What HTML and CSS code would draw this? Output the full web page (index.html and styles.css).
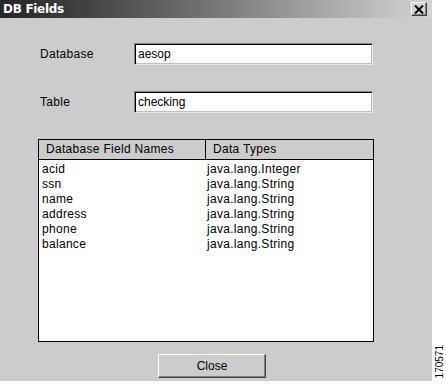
FILE: index.html
```html
<!DOCTYPE html>
<html>
<head>
<meta charset="utf-8">
<link rel="stylesheet" href="styles.css">
</head>
<body>
<div class="screen">
  <div class="dialog">
    <div class="titlebar">
      <span class="title">DB Fields</span>
      <span class="xbtn"><svg width="10" height="9" viewBox="0 0 10 9"><path d="M1 0.5 L9 8.5 M9 0.5 L1 8.5" stroke="#000" stroke-width="2"/></svg></span>
    </div>
    <div class="content">
      <div class="form">
        <label class="lbl">Database</label>
        <div class="field">aesop</div>
        <label class="lbl">Table</label>
        <div class="field">checking</div>
      </div>
      <div class="table">
        <div class="thead">
          <div class="th c1">Database Field Names</div>
          <div class="th c2">Data Types</div>
        </div>
        <div class="tbody">
          <div class="tr"><span class="c1">acid</span><span class="c2">java.lang.Integer</span></div>
          <div class="tr"><span class="c1">ssn</span><span class="c2">java.lang.String</span></div>
          <div class="tr"><span class="c1">name</span><span class="c2">java.lang.String</span></div>
          <div class="tr"><span class="c1">address</span><span class="c2">java.lang.String</span></div>
          <div class="tr"><span class="c1">phone</span><span class="c2">java.lang.String</span></div>
          <div class="tr"><span class="c1">balance</span><span class="c2">java.lang.String</span></div>
        </div>
      </div>
      <div class="actions">
        <button class="btn">Close</button>
      </div>
    </div>
  </div>
  <div class="side"><span class="code">170571</span></div>
</div>
</body>
</html>
```

FILE: styles.css
```css
* { box-sizing: border-box; }
html, body { margin: 0; padding: 0; background: #fff; }
body { font-family: "Liberation Sans", Arial, sans-serif; font-size: 12px; letter-spacing: 0.3px; color: #000; }

.screen { display: flex; width: 446px; height: 384px; }
.dialog { flex: none; width: 432px; height: 381px; background: #cccccc; display: flex; flex-direction: column; }

.titlebar {
  height: 18px;
  display: flex; align-items: center; justify-content: space-between;
  padding: 0 5px 0 3px;
  background: linear-gradient(to right, #262626 0%, #3a3a3a 15%, #6e6e6e 45%, #a8a8a8 75%, #d4d4d4 100%);
}
.title { color: #fff; font-weight: bold; font-size: 12px; font-family: "DejaVu Sans", sans-serif; letter-spacing: -0.3px; }
.xbtn {
  width: 16px; height: 14px;
  display: flex; align-items: center; justify-content: center;
  background: #d4d4d4;
  border: 1px solid; border-color: #fff #404040 #404040 #fff;
  box-shadow: inset -1px -1px #808080;
}

.content { flex: 1; padding: 25px 0 0 38px; display: flex; flex-direction: column; }

.form { display: grid; grid-template-columns: 96px 239px; row-gap: 26px; align-items: center; }
.lbl { padding-left: 2px; }
.field {
  height: 22px;
  background: #fff;
  border: 1px solid; border-color: #808080 #e8e8e8 #e8e8e8 #808080;
  box-shadow: inset 1px 1px #000, inset -1px -1px #c0c0c0;
  padding: 2px 3px 0;
  line-height: 16px;
  letter-spacing: 0;
}

.table { margin-top: 26px; width: 336px; height: 203px; border: 1px solid #000; background: #fff; display: flex; flex-direction: column; }
.thead { display: flex; height: 20px; background: #cccccc; border-bottom: 1px solid #000; }
.th { line-height: 19px; padding-left: 7px; }
.th.c1 { width: 167px; border-right: 1px solid #000; }
.tbody { padding-top: 2px; }
.tr { display: flex; height: 15px; line-height: 15px; }
.tr .c1 { width: 167px; padding-left: 3px; }
.tr .c2 { padding-left: 1px; }

.actions { margin-top: 12px; padding-left: 120px; }
.btn {
  width: 108px; height: 24px;
  font: inherit; color: #000;
  background: #cccccc;
  border: 1px solid; border-color: #fff #404040 #404040 #fff;
  box-shadow: inset -1px -1px #808080;
  padding: 0;
}

.side { flex: none; width: 14px; display: flex; align-items: flex-end; justify-content: center; padding-bottom: 6px; }
.code { writing-mode: vertical-rl; transform: rotate(180deg); font-size: 10px; line-height: 11px; letter-spacing: 0; }
```
